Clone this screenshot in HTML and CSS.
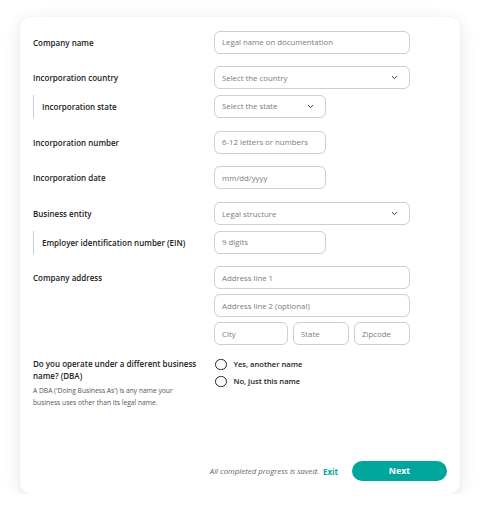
FILE: index.html
```
<!DOCTYPE html>
<html lang="en">
<head>
<meta charset="utf-8">
<link rel="stylesheet" href="styles.css">
</head>
<body>
<div class="card">
  <div class="form">
    <div class="row">
      <div class="label">Company name</div>
      <div class="field wide"><span class="ph">Legal name on documentation</span></div>
    </div>
    <div class="group">
      <div class="row">
        <div class="label">Incorporation country</div>
        <div class="field wide select"><span class="ph">Select the country</span><svg class="chev" width="7" height="5" viewBox="0 0 7 5"><path d="M1 1.2 L3.5 3.6 L6 1.2" fill="none" stroke="#333" stroke-width="1"/></svg></div>
      </div>
      <div class="row">
        <div class="label sub">Incorporation state</div>
        <div class="field narrow select"><span class="ph">Select the state</span><svg class="chev" width="7" height="5" viewBox="0 0 7 5"><path d="M1 1.2 L3.5 3.6 L6 1.2" fill="none" stroke="#333" stroke-width="1"/></svg></div>
      </div>
    </div>
    <div class="row">
      <div class="label">Incorporation number</div>
      <div class="field narrow"><span class="ph">6-12 letters or numbers</span></div>
    </div>
    <div class="row">
      <div class="label">Incorporation date</div>
      <div class="field narrow"><span class="ph">mm/dd/yyyy</span></div>
    </div>
    <div class="group">
      <div class="row">
        <div class="label">Business entity</div>
        <div class="field wide select"><span class="ph">Legal structure</span><svg class="chev" width="7" height="5" viewBox="0 0 7 5"><path d="M1 1.2 L3.5 3.6 L6 1.2" fill="none" stroke="#333" stroke-width="1"/></svg></div>
      </div>
      <div class="row">
        <div class="label sub">Employer identification number (EIN)</div>
        <div class="field narrow"><span class="ph">9 digits</span></div>
      </div>
    </div>
    <div class="row top">
      <div class="label lh">Company address</div>
      <div class="stack">
        <div class="field wide"><span class="ph">Address line 1</span></div>
        <div class="field wide"><span class="ph">Address line 2 (optional)</span></div>
        <div class="triple">
          <div class="field city"><span class="ph">City</span></div>
          <div class="field st"><span class="ph">State</span></div>
          <div class="field zip"><span class="ph">Zipcode</span></div>
        </div>
      </div>
    </div>
    <div class="row top dba">
      <div class="dbatext">
        <div class="question">Do you operate under a different business name? (DBA)</div>
        <div class="help">A DBA ('Doing Business As') is any name your business uses other than its legal name.</div>
      </div>
      <div class="radios">
        <div class="radio"><span class="circle"></span><span>Yes, another name</span></div>
        <div class="radio"><span class="circle"></span><span>No, just this name</span></div>
      </div>
    </div>
  </div>
  <div class="footer">
    <span class="saved">All completed progress is saved.</span>
    <span class="exit">Exit</span>
    <span class="next">Next</span>
  </div>
</div>
</body>
</html>
```
FILE: styles.css
```
* { box-sizing: border-box; }
html, body { margin: 0; padding: 0; background: #fff; }
body {
  font-family: "Open Sans", "Liberation Sans", sans-serif;
  padding: 17px 21px 0 20px;
}
.card {
  width: 440px;
  height: 477px;
  background: #fff;
  border-radius: 12px;
  box-shadow: 0 4px 18px rgba(0,0,0,0.10), 0 0 3px rgba(0,0,0,0.04);
  padding: 13.5px 13px 13px 13px;
  display: flex;
  flex-direction: column;
}
.form {
  display: flex;
  flex-direction: column;
  gap: 12.8px;
}
.group {
  display: flex;
  flex-direction: column;
  gap: 5.5px;
}
.row {
  display: grid;
  grid-template-columns: 181px 1fr;
  align-items: center;
}
.row.top { align-items: start; }
.label {
  font-size: 8px;
  font-weight: 600;
  color: #222;
}
.label.lh { line-height: 23px; }
.label.sub {
  border-left: 1.5px solid #c9cce0;
  padding-left: 8px;
  height: 23px;
  line-height: 23px;
}
.field {
  height: 23px;
  border: 1px solid #cfcfcf;
  border-radius: 6px;
  padding: 0 7px;
  display: flex;
  align-items: center;
  justify-content: space-between;
  font-size: 7.8px;
}
.ph { color: #7b7b7b; }
.wide { width: 196px; }
.narrow { width: 112px; }
.chev { margin-right: 4px; }
.stack { display: flex; flex-direction: column; gap: 5px; }
.triple { display: flex; gap: 5px; width: 196px; }
.city { width: 74px; }
.st { width: 56px; }
.zip { width: 56px; }
.dba { margin-top: 0; }
.dbatext { width: 168px; }
.question {
  font-size: 8px;
  font-weight: 600;
  color: #222;
  line-height: 12px;
}
.help {
  margin-top: 3px;
  width: 160px;
  font-size: 6.7px;
  line-height: 11.5px;
  color: #555;
}
.radios {
  display: flex;
  flex-direction: column;
  gap: 5px;
  padding-top: 0;
}
.radio {
  display: flex;
  align-items: center;
  gap: 7px;
  font-size: 7.6px;
  font-weight: 600;
  color: #222;
  height: 12px;
}
.circle {
  width: 11.5px;
  height: 11.5px;
  border: 1.3px solid #222;
  border-radius: 50%;
  margin-left: 1px;
}
.footer {
  margin-top: auto;
  display: flex;
  align-items: center;
  justify-content: flex-end;
}
.saved {
  font-size: 7.8px;
  font-style: italic;
  color: #666;
}
.exit {
  margin-left: 4px;
  font-size: 8px;
  font-weight: 700;
  color: #00a69c;
}
.next {
  margin-left: 14px;
  width: 95px;
  height: 20px;
  border-radius: 10px;
  background: #00a69c;
  color: #fff;
  font-size: 8.8px;
  font-weight: 700;
  display: flex;
  align-items: center;
  justify-content: center;
}
```
